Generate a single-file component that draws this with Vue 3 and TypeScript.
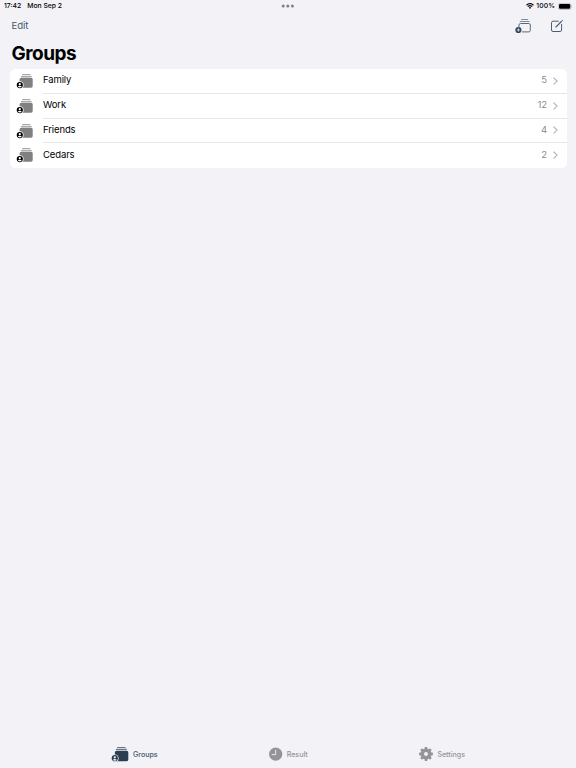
<script setup lang="ts">
import { ref } from 'vue'

interface Group {
  name: string
  count: number
}

const groups = ref<Group[]>([
  { name: 'Family', count: 5 },
  { name: 'Work', count: 12 },
  { name: 'Friends', count: 4 },
  { name: 'Cedars', count: 2 },
])

// Eight teeth, evenly spread around the gear
const teeth: number[] = Array.from({ length: 8 }, (_, i) => i * 45)
</script>

<template>
  <div class="screen">
    <div class="status">
      <div class="status-left"><span class="time">17:42</span><span class="date">Mon Sep 2</span></div>
      <svg class="dots" width="14" height="4" viewBox="0 0 14 4">
        <circle cx="2.2" cy="2" r="1.5" /><circle cx="6.8" cy="2" r="1.5" /><circle cx="11.4" cy="2" r="1.5" />
      </svg>
      <div class="status-right">
        <svg class="wifi" width="8" height="6" viewBox="0 0 8 6">
          <path d="M.5 2.2Q4-1 7.5 2.2M1.8 3.6Q4 1.7 6.2 3.6" fill="none" stroke="#111" stroke-width="1.2" />
          <path d="M2.8 4.6Q4 3.6 5.2 4.6L4 5.9Z" fill="#111" />
        </svg>
        <span class="percent">100%</span>
        <svg class="battery" width="15" height="7" viewBox="0 0 15 7">
          <rect x=".3" y=".4" width="12.6" height="6.1" rx="1.9" fill="none" stroke="#a5a5aa" stroke-width=".6" />
          <rect x="1" y="1.1" width="11.2" height="4.7" rx="1.2" fill="#000" />
          <path d="M13.5 2.5Q14.5 3.45 13.5 4.4Z" fill="#8d8d92" />
        </svg>
      </div>
    </div>

    <header class="toolbar">
      <button class="edit">Edit</button>
      <div class="actions">
        <svg width="17" height="16" viewBox="0 0 17 16">
          <rect x="6" y="1" width="7.2" height="1.1" rx=".5" fill="#7f8d9b" />
          <rect x="4.6" y="2.9" width="10" height="1.2" rx=".6" fill="#7f8d9b" />
          <path d="M4 9V7Q4 5.5 5.5 5.5H13.8Q15.3 5.5 15.3 7V12.4Q15.3 13.9 13.8 13.9H7" fill="none" stroke="#586b7c" />
          <circle cx="3.4" cy="12" r="3.1" fill="#34495e" />
          <path d="M1.8 12H5M3.4 10.4V13.6" stroke="#f2f2f7" stroke-width=".7" />
        </svg>
        <svg width="14" height="14" viewBox="0 0 14 14" fill="none" stroke="#4d6073">
          <path d="M8.8 2.2H3Q1.5 2.2 1.5 3.7V11Q1.5 12.5 3 12.5H10.1Q11.6 12.5 11.6 11V5" />
          <path d="M5.6 8.4L11.6 2.3" stroke-width="1.3" />
          <path d="M12.1 1.8L12.7 1.2" stroke-width="1.3" />
        </svg>
      </div>
    </header>

    <h1>Groups</h1>

    <ul class="card">
      <li v-for="group in groups" :key="group.name">
        <svg class="group-icon" width="18" height="16" viewBox="0 0 18 16">
          <rect x="6" y="1.1" width="8.6" height="1.2" rx=".6" fill="#aaa" />
          <rect x="4.7" y="2.9" width="11.2" height="1.3" rx=".65" fill="#aaa" />
          <rect x="3.6" y="4.8" width="13.1" height="9.9" rx="1.6" fill="#808080" />
          <circle cx="3.8" cy="12.1" r="3.8" fill="#fff" />
          <circle cx="3.8" cy="12.1" r="3.1" fill="#000" />
          <circle cx="3.8" cy="11.2" r="1.1" fill="#fff" />
          <path d="M1.9 13.8Q2.3 12.8 3.8 12.8T5.7 13.8Q3.8 15.4 1.9 13.8Z" fill="#fff" />
        </svg>
        <div class="row">
          <span class="name">{{ group.name }}</span>
          <span class="count">{{ group.count }}</span>
          <svg class="chevron" width="5" height="8" viewBox="0 0 5 8">
            <path d="M.9 1L4.1 4.1L.9 7.2" fill="none" stroke="#b5b5b9" stroke-width="1.15" stroke-linecap="round" stroke-linejoin="round" />
          </svg>
        </div>
      </li>
    </ul>

    <nav class="tabs">
      <a class="tab active">
        <svg width="18" height="16" viewBox="0 0 18 16">
          <rect x="6" y=".9" width="8.8" height="1.2" rx=".6" fill="#687786" />
          <rect x="4.8" y="2.7" width="11.2" height="1.3" rx=".65" fill="#687786" />
          <rect x="3.9" y="4.7" width="13.4" height="10.6" rx="1.7" fill="#2c3e50" />
          <circle cx="3.8" cy="12.2" r="3.8" fill="#f2f2f7" />
          <circle cx="3.8" cy="12.2" r="3.1" fill="#2c3e50" />
          <circle cx="3.8" cy="11.3" r="1.1" fill="#f2f2f7" />
          <path d="M1.9 13.9Q2.3 12.9 3.8 12.9T5.7 13.9Q3.8 15.5 1.9 13.9Z" fill="#f2f2f7" />
        </svg>
        <span>Groups</span>
      </a>
      <a class="tab">
        <svg width="14" height="14" viewBox="0 0 14 14">
          <circle cx="6.7" cy="7.2" r="6.6" fill="#949498" />
          <path d="M6.7 3.2V7.6H3.1" fill="none" stroke="#f2f2f7" stroke-width=".9" stroke-linecap="round" />
        </svg>
        <span>Result</span>
      </a>
      <a class="tab">
        <svg width="14" height="14" viewBox="0 0 14 14" fill="#949498">
          <rect v-for="angle in teeth" :key="angle" x="5.6" y=".1" width="2.8" height="3.4" rx=".7" :transform="`rotate(${angle} 7 7)`" />
          <circle cx="7" cy="7" r="3.7" fill="none" stroke="#949498" stroke-width="3.5" />
        </svg>
        <span>Settings</span>
      </a>
    </nav>
  </div>
</template>

<style>
body {
  background: #f2f2f7;
}
</style>

<style scoped>
.screen {
  display: flex;
  flex-direction: column;
  width: 576px;
  height: 768px;
  overflow: hidden;
  background: #f2f2f7;
  color: #000;
  font-family: Inter, "Liberation Sans", sans-serif;
}
svg {
  display: block;
  flex: none;
}
.status {
  display: grid;
  grid-template-columns: 1fr 14px 1fr;
  align-items: center;
  height: 12px;
  padding: 0 4px;
  font-size: 6.8px;
  line-height: 12px;
  font-weight: 500;
}
.status-left {
  display: flex;
  gap: 6px;
}
.dots {
  fill: #808084;
}
.status-right {
  display: flex;
  align-items: center;
  justify-content: flex-end;
  margin-right: -1px;
}
.percent {
  margin: 0 3px 0 2px;
  letter-spacing: 0.1px;
}
.toolbar {
  display: flex;
  align-items: center;
  justify-content: space-between;
  height: 28px;
  padding: 0 12px 0 11.5px;
}
.edit {
  padding: 0;
  border: 0;
  background: none;
  color: #44576a;
  font: 400 9.6px/14px Inter, sans-serif;
  letter-spacing: -0.1px;
}
.actions {
  display: flex;
  align-items: center;
  gap: 18px;
}
h1 {
  margin: 0 0 0 11.5px;
  height: 29px;
  font-size: 19px;
  line-height: 27px;
  font-weight: 700;
  letter-spacing: -0.5px;
}
.card {
  margin: 0 9.5px;
  padding: 0;
  list-style: none;
  background: #fff;
  border-radius: 5.5px;
  overflow: hidden;
}
.card li {
  display: flex;
  height: 24.75px;
}
.group-icon {
  margin: 4px 9.5px 0 6px;
}
.row {
  display: flex;
  flex: 1;
  align-items: center;
  padding-right: 9px;
  border-bottom: 1px solid #e7e7e9;
  font-size: 9.5px;
  line-height: 12px;
  letter-spacing: -0.12px;
}
.row .name,
.row .count {
  padding-bottom: 0.8px;
}
li:last-child .row {
  border-bottom-color: transparent;
}
.name {
  flex: 1;
}
.count {
  color: #8a8a8e;
}
.chevron {
  margin-left: 5.6px;
}
.tabs {
  display: grid;
  grid-template-columns: 47px 40px 47px;
  column-gap: 110.7px;
  margin-top: auto;
  padding-left: 111px;
  height: 28px;
}
.tab {
  display: flex;
  align-items: center;
  gap: 4px;
  color: #949498;
  font-size: 7.1px;
  font-weight: 500;
}
.active {
  color: #44576a;
}
</style>
